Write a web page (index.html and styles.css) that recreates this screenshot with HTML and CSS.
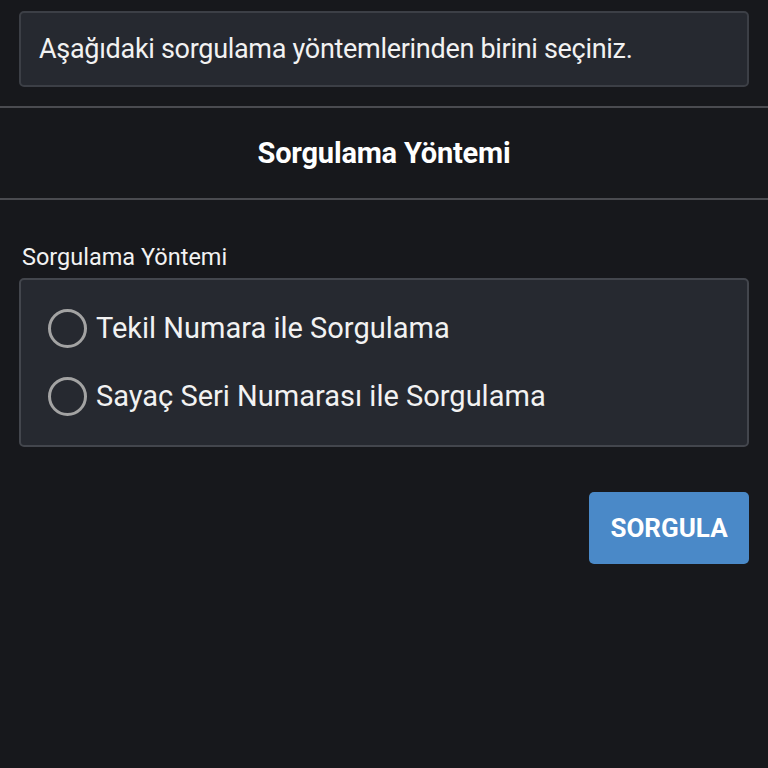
FILE: index.html
```html
<!DOCTYPE html>
<html>
<head>
<meta charset="UTF-8" />
<meta name="viewport" content="width=device-width, initial-scale=1.0" />
<title>Sorgulama</title>
<link rel="stylesheet" href="styles.css">
</head>
<body>
    <div class="info">Aşağıdaki sorgulama yöntemlerinden birini seçiniz.</div>

    <div class="section-title">Sorgulama Yöntemi</div>

    <form class="query-form">
        <div class="field-label">Sorgulama Yöntemi</div>
        <div class="radio-group">
            <label class="radio-row">
                <input type="radio" name="method" value="tekil">
                <span class="radio-mark"></span>
                <span class="radio-text">Tekil Numara ile Sorgulama</span>
            </label>
            <label class="radio-row">
                <input type="radio" name="method" value="sayac">
                <span class="radio-mark"></span>
                <span class="radio-text">Sayaç Seri Numarası ile Sorgulama</span>
            </label>
        </div>
        <div class="actions">
            <button type="button" class="btn-query">SORGULA</button>
        </div>
    </form>
</body>
</html>
```

FILE: styles.css
```css
html, body{
    margin:0px;
    padding:0px;
}
body{
    background:#17181c;
    color:#f2f2f2;
    font-family:Roboto, "Liberation Sans", sans-serif;
    padding-top:11px;
}

/* info box on top */
.info{
    margin:0px 19px;
    box-sizing:border-box;
    height:76px;
    padding:0px 18px;
    display:flex;
    align-items:center;
    background:#262930;
    border:2px solid #3c3f46;
    border-radius:5px;
    font-size:27px;
    letter-spacing:-0.3px;
}

.section-title{
    margin-top:19px;
    height:90px;
    border-top:2px solid #4a4b50;
    border-bottom:2px solid #4a4b50;
    display:flex;
    align-items:center;
    justify-content:center;
    font-size:29px;
    font-weight:bold;
    letter-spacing:-0.2px;
    color:#fff;
}

.query-form{
    padding:44px 19px 0px 19px;
}

.field-label{
    padding-left:3px;
    font-size:23.5px;
    line-height:26px;
    margin-bottom:8px;
}

.radio-group{
    padding:29px 27px 30px 27px;
    display:flex;
    flex-direction:column;
    gap:30px;
    background:#262930;
    border:2px solid #43464d;
    border-radius:5px;
}

.radio-row{
    display:flex;
    align-items:center;
    gap:9px;
    height:38px;
    font-size:29px;
    cursor:pointer;
}
.radio-row input{
    display:none;
}
.radio-mark{
    box-sizing:border-box;
    width:39px;
    height:39px;
    border:3px solid #a3a3a3;
    border-radius:50%;
}
.radio-row input:checked + .radio-mark{
    border-color:#4a89c8;
    box-shadow:inset 0 0 0 6px #262930, inset 0 0 0 20px #4a89c8;
}

.actions{
    display:flex;
    justify-content:flex-end;
    margin-top:45px;
}
.btn-query{
    width:160px;
    height:72px;
    background:#4a89c8;
    color:#fff;
    border:none;
    border-radius:5px;
    font-family:Roboto, "Liberation Sans", sans-serif;
    font-size:26px;
    font-weight:bold;
}
```
